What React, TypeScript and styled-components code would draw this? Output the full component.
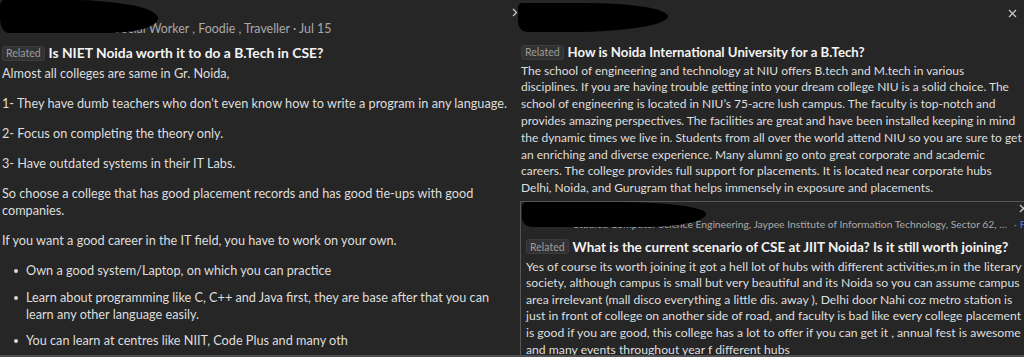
import React from "react";
import styled, { createGlobalStyle } from "styled-components";

const FONT = `Lato, "Open Sans", "Liberation Sans", sans-serif`;

const GlobalStyle = createGlobalStyle`
  html, body { margin: 0; padding: 0; background: #262626; }
  #root { width: 1024px; height: 357px; overflow: hidden; }
`;

const Page = styled.div`
  box-sizing: border-box;
  width: 1024px;
  height: 357px;
  display: grid;
  grid-template-columns: 507px 1fr;
  background: #262626;
  border-bottom: 2px solid #505050;
  overflow: hidden;
  font-family: ${FONT};
  color: #dedede;
  font-size: 12px;
  line-height: 16.8px;
`;

const Column = styled.section<{ $pad: number }>`
  position: relative;
  min-width: 0;
  overflow: hidden;
  padding-left: ${(p) => p.$pad}px;
`;

const Redact = styled.div<{ $w: number; $h: number; $top: number; $left: number; $shape?: string }>`
  position: absolute;
  top: ${(p) => p.$top}px;
  left: ${(p) => p.$left}px;
  width: ${(p) => p.$w}px;
  height: ${(p) => p.$h}px;
  background: #000;
  border-radius: ${(p) => p.$shape ?? "4px 60% 70% 10px / 6px 50% 60% 40%"};
`;

const Header = styled.header<{ $h: number; $padTop: number }>`
  position: relative;
  box-sizing: border-box;
  height: ${(p) => p.$h}px;
  padding-top: ${(p) => p.$padTop}px;
`;

const Meta = styled.div<{ $indent: number; $fs: number }>`
  display: flex;
  padding-left: ${(p) => p.$indent}px;
  font-size: ${(p) => p.$fs}px;
  line-height: 14px;
  color: #a9a9a9;
  white-space: nowrap;
`;

const MetaText = styled.span<{ $w?: number }>`
  display: inline-block;
  ${(p) => (p.$w ? `width: ${p.$w}px; text-align: right;` : "")}
`;

const QuestionRow = styled.div<{ $mt: number }>`
  display: flex;
  align-items: center;
  gap: 4px;
  height: 18px;
  margin-top: ${(p) => p.$mt}px;
  white-space: nowrap;
`;

const Badge = styled.span`
  box-sizing: border-box;
  display: inline-flex;
  align-items: center;
  height: 15px;
  padding: 0 3px;
  border: 1px solid #3d3d3d;
  border-radius: 3px;
  background: #323232;
  color: #9c9c9c;
  font-size: 10.5px;
`;

const Title = styled.span<{ $fs: number }>`
  color: #f4f4f4;
  font-weight: 700;
  font-size: ${(p) => p.$fs}px;
`;

const Body = styled.div<{ $mt: number; $fs: number; $lh?: number }>`
  margin-top: ${(p) => p.$mt}px;
  font-size: ${(p) => p.$fs}px;
  ${(p) => (p.$lh ? `line-height: ${p.$lh}px;` : "")}
`;

const Para = styled.p<{ $gap: number }>`
  margin: 0 0 ${(p) => p.$gap}px;
`;

const Line = styled.span`
  display: block;
  white-space: nowrap;
`;

const Bullets = styled.ul`
  list-style: none;
  margin: 0;
  padding: 0 0 0 24px;
`;

const Bullet = styled.li`
  position: relative;
  margin: 0 0 10px;
  &::before {
    content: "";
    position: absolute;
    left: -12px;
    top: 7px;
    width: 4px;
    height: 4px;
    border-radius: 50%;
    background: #d8d8d8;
  }
`;

const IconSlot = styled.span<{ $top: number; $left?: number; $right?: number }>`
  position: absolute;
  top: ${(p) => p.$top}px;
  ${(p) => (p.$left !== undefined ? `left: ${p.$left}px;` : "")}
  ${(p) => (p.$right !== undefined ? `right: ${p.$right}px;` : "")}
  display: flex;
  line-height: 0;
  z-index: 1;
`;

const Card = styled.article`
  position: relative;
  box-sizing: border-box;
  width: 540px;
  margin: 4px 0 0 -1px;
  padding-left: 5px;
  border-top: 1px solid #565656;
  border-left: 1px solid #565656;
`;

const Dot = styled.span`
  margin-left: 7px;
  color: #8a8a8a;
`;

const Follow = styled.span`
  margin-left: 3px;
  color: #4f7ed8;
`;

const Chevron = () => (
  <svg width="6" height="9" viewBox="0 0 6 9" fill="none">
    <path d="M1 1l3.5 3.5L1 8" stroke="#c8c8c8" strokeWidth="1.3" />
  </svg>
);

const Close = () => (
  <svg width="9" height="9" viewBox="0 0 9 9" fill="none">
    <path d="M1 1l7 7M8 1L1 8" stroke="#c8c8c8" strokeWidth="1.3" />
  </svg>
);

const niuLines = [
  "The school of engineering and technology at NIU offers B.tech and M.tech in various",
  "disciplines. If you are having trouble getting into your dream college NIU is a solid choice. The",
  "school of engineering is located in NIU\u2019s 75-acre lush campus. The faculty is top-notch and",
  "provides amazing perspectives. The facilities are great and have been installed keeping in mind",
  "the dynamic times we live in. Students from all over the world attend NIU so you are sure to get",
  "an enriching and diverse experience. Many alumni go onto great corporate and academic",
  "careers. The college provides full support for placements. It is located near corporate hubs",
  "Delhi, Noida, and Gurugram that helps immensely in exposure and placements.",
];

const jiitLines = [
  "Yes of course its worth joining it got a hell lot of hubs with different activities,m in the literary",
  "society, although campus is small but very beautiful and its Noida so you can assume campus",
  "area irrelevant (mall disco everything a little dis. away ), Delhi door Nahi coz metro station is",
  "just in front of college on another side of road, and faculty is bad like every college placement",
  "is good if you are good, this college has a lot to offer if you can get it , annual fest is awesome",
  "and many events throughout year f different hubs",
];

const leftParas: string[][] = [
  ["Almost all colleges are same in Gr. Noida,"],
  ["1- They have dumb teachers who don\u2019t even know how to write a program in any language."],
  ["2- Focus on completing the theory only."],
  ["3- Have outdated systems in their IT Labs."],
  ["So choose a college that has good placement records and has good tie-ups with good", "companies."],
  ["If you want a good career in the IT field, you have to work on your own."],
];

const leftBullets: string[][] = [
  ["Own a good system/Laptop, on which you can practice"],
  ["Learn about programming like C, C++ and Java first, they are base after that you can", "learn any other language easily."],
  ["You can learn at centres like NIIT, Code Plus and many oth"],
];

const Lines = ({ lines }: { lines: string[] }) => (
  <>
    {lines.map((l, i) => (
      <Line key={i}>{l}</Line>
    ))}
  </>
);

export default function App() {
  return (
    <>
      <GlobalStyle />
      <Page>
        <Column $pad={2}>
          <Header $h={36} $padTop={22}>
            <Meta $indent={112} $fs={12.4}>
              <MetaText>Social Worker , Foodie , Traveller · Jul 15</MetaText>
            </Meta>
            <Redact
              $top={0}
              $left={-2}
              $w={158}
              $h={33}
              $shape="4px 55% 30% 10px / 6px 55% 45% 40%"
            />
          </Header>
          <QuestionRow $mt={8}>
            <Badge>Related</Badge>
            <Title $fs={13.85}>Is NIET Noida worth it to do a B.Tech in CSE?</Title>
          </QuestionRow>
          <Body $mt={2.6} $fs={12.7}>
            {leftParas.map((p, i) => (
              <Para key={i} $gap={13.3}>
                <Lines lines={p} />
              </Para>
            ))}
            <Bullets>
              {leftBullets.map((b, i) => (
                <Bullet key={i}>
                  <Lines lines={b} />
                </Bullet>
              ))}
            </Bullets>
          </Body>
        </Column>

        <Column $pad={14}>
          <IconSlot $top={8} $left={5}>
            <Chevron />
          </IconSlot>
          <IconSlot $top={9} $right={7}>
            <Close />
          </IconSlot>
          <Header $h={36} $padTop={0}>
            <Redact $top={3} $left={-3} $w={150} $h={29} />
          </Header>
          <QuestionRow $mt={7}>
            <Badge>Related</Badge>
            <Title $fs={13.2}>How is Noida International University for a B.Tech?</Title>
          </QuestionRow>
          <Body $mt={1.6} $fs={12}>
            <Lines lines={niuLines} />
          </Body>
          <Card>
            <IconSlot $top={2} $right={32}>
              <Close />
            </IconSlot>
            <Header $h={29} $padTop={15}>
              <Meta $indent={0} $fs={10.3}>
                <MetaText $w={481}>
                  Studied Computer Science Engineering, Jaypee Institute of Information Technology, Sector 62, …
                </MetaText>
                <Dot>·</Dot>
                <Follow>Follow</Follow>
              </Meta>
              <Redact
                $top={0}
                $left={-4}
                $w={184}
                $h={25}
                $shape="4px 50% 35% 10px / 6px 50% 55% 40%"
              />
            </Header>
            <QuestionRow $mt={7}>
              <Badge>Related</Badge>
              <Title $fs={13.5}>What is the current scenario of CSE at JIIT Noida? Is it still worth joining?</Title>
            </QuestionRow>
            <Body $mt={2.6} $fs={12.2} $lh={16.6}>
              <Lines lines={jiitLines} />
            </Body>
          </Card>
        </Column>
      </Page>
    </>
  );
}
